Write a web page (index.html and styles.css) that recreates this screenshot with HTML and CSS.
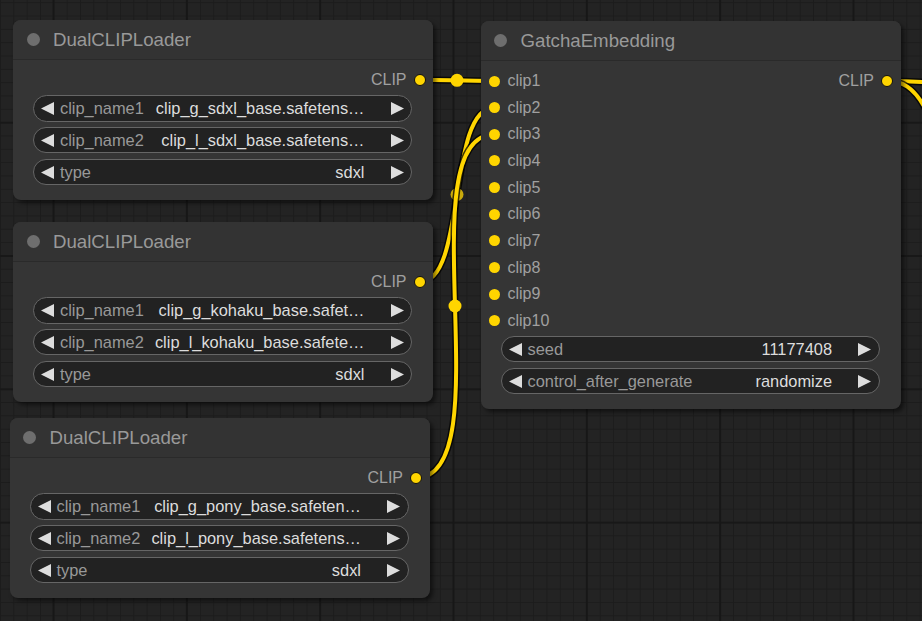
FILE: index.html
```html
<!DOCTYPE html>
<html>
<head>
<meta charset="utf-8">
<link rel="stylesheet" href="styles.css">
</head>
<body>
<div class="canvas">
  <svg class="links" width="922" height="621" viewBox="0 0 922 621">
    <g class="link">
      <path class="lb" d="M420,79.7 C438.5,79.7 475.5,81 494,81"/>
      <path class="ly" d="M420,79.7 C438.5,79.7 475.5,81 494,81"/>
    </g>
    <circle class="mid" cx="457" cy="80.3" r="6.5"/>
    <g class="link">
      <path class="lb" d="M420,282 C467,282 447,107.7 494,107.7"/>
      <path class="ly" d="M420,282 C467,282 447,107.7 494,107.7"/>
    </g>
    <circle class="mid dim" cx="457" cy="194.5" r="6.5"/>
    <g class="link">
      <path class="lb" d="M416,478 C504,478 406,134.4 494,134.4"/>
      <path class="ly" d="M416,478 C504,478 406,134.4 494,134.4"/>
    </g>
    <circle class="mid" cx="455" cy="306" r="6.5"/>
    <g class="link">
      <path class="lb" d="M887,81 C950,81 1000,90 1100,100"/>
      <path class="ly" d="M887,81 C950,81 1000,90 1100,100"/>
      <path class="lb" d="M887,81 C918,81 930,108 960,200"/>
      <path class="ly" d="M887,81 C918,81 930,108 960,200"/>
    </g>
  </svg>

  <div class="node n1">
    <div class="title"><span class="tdot"></span><span class="tname">DualCLIPLoader</span></div>
    <div class="body">
      <div class="slot out"><span class="slabel">CLIP</span><span class="dot odot"></span></div>
      <div class="widgets">
        <div class="widget"><svg class="arr" viewBox="0 0 13 13"><polygon points="13,0 0,6.5 13,13"/></svg><span class="wl">clip_name1</span><span class="wv">clip_g_sdxl_base.safetens…</span><svg class="arr" viewBox="0 0 13 13"><polygon points="0,0 13,6.5 0,13"/></svg></div>
        <div class="widget"><svg class="arr" viewBox="0 0 13 13"><polygon points="13,0 0,6.5 13,13"/></svg><span class="wl">clip_name2</span><span class="wv">clip_l_sdxl_base.safetens…</span><svg class="arr" viewBox="0 0 13 13"><polygon points="0,0 13,6.5 0,13"/></svg></div>
        <div class="widget"><svg class="arr" viewBox="0 0 13 13"><polygon points="13,0 0,6.5 13,13"/></svg><span class="wl">type</span><span class="wv">sdxl</span><svg class="arr" viewBox="0 0 13 13"><polygon points="0,0 13,6.5 0,13"/></svg></div>
      </div>
    </div>
  </div>

  <div class="node n2">
    <div class="title"><span class="tdot"></span><span class="tname">DualCLIPLoader</span></div>
    <div class="body">
      <div class="slot out"><span class="slabel">CLIP</span><span class="dot odot"></span></div>
      <div class="widgets">
        <div class="widget"><svg class="arr" viewBox="0 0 13 13"><polygon points="13,0 0,6.5 13,13"/></svg><span class="wl">clip_name1</span><span class="wv">clip_g_kohaku_base.safet…</span><svg class="arr" viewBox="0 0 13 13"><polygon points="0,0 13,6.5 0,13"/></svg></div>
        <div class="widget"><svg class="arr" viewBox="0 0 13 13"><polygon points="13,0 0,6.5 13,13"/></svg><span class="wl">clip_name2</span><span class="wv">clip_l_kohaku_base.safete…</span><svg class="arr" viewBox="0 0 13 13"><polygon points="0,0 13,6.5 0,13"/></svg></div>
        <div class="widget"><svg class="arr" viewBox="0 0 13 13"><polygon points="13,0 0,6.5 13,13"/></svg><span class="wl">type</span><span class="wv">sdxl</span><svg class="arr" viewBox="0 0 13 13"><polygon points="0,0 13,6.5 0,13"/></svg></div>
      </div>
    </div>
  </div>

  <div class="node n3">
    <div class="title"><span class="tdot"></span><span class="tname">DualCLIPLoader</span></div>
    <div class="body">
      <div class="slot out"><span class="slabel">CLIP</span><span class="dot odot"></span></div>
      <div class="widgets">
        <div class="widget"><svg class="arr" viewBox="0 0 13 13"><polygon points="13,0 0,6.5 13,13"/></svg><span class="wl">clip_name1</span><span class="wv">clip_g_pony_base.safeten…</span><svg class="arr" viewBox="0 0 13 13"><polygon points="0,0 13,6.5 0,13"/></svg></div>
        <div class="widget"><svg class="arr" viewBox="0 0 13 13"><polygon points="13,0 0,6.5 13,13"/></svg><span class="wl">clip_name2</span><span class="wv">clip_l_pony_base.safetens…</span><svg class="arr" viewBox="0 0 13 13"><polygon points="0,0 13,6.5 0,13"/></svg></div>
        <div class="widget"><svg class="arr" viewBox="0 0 13 13"><polygon points="13,0 0,6.5 13,13"/></svg><span class="wl">type</span><span class="wv">sdxl</span><svg class="arr" viewBox="0 0 13 13"><polygon points="0,0 13,6.5 0,13"/></svg></div>
      </div>
    </div>
  </div>

  <div class="node ng">
    <div class="title"><span class="tdot"></span><span class="tname">GatchaEmbedding</span></div>
    <div class="body">
      <div class="slot both"><span class="dot idot"></span><span class="ilabel">clip1</span><span class="slabel push">CLIP</span><span class="dot odot"></span></div>
      <div class="slot"><span class="dot idot"></span><span class="ilabel">clip2</span></div>
      <div class="slot"><span class="dot idot"></span><span class="ilabel">clip3</span></div>
      <div class="slot"><span class="dot idot"></span><span class="ilabel">clip4</span></div>
      <div class="slot"><span class="dot idot"></span><span class="ilabel">clip5</span></div>
      <div class="slot"><span class="dot idot"></span><span class="ilabel">clip6</span></div>
      <div class="slot"><span class="dot idot"></span><span class="ilabel">clip7</span></div>
      <div class="slot"><span class="dot idot"></span><span class="ilabel">clip8</span></div>
      <div class="slot"><span class="dot idot"></span><span class="ilabel">clip9</span></div>
      <div class="slot"><span class="dot idot"></span><span class="ilabel">clip10</span></div>
      <div class="widgets">
        <div class="widget"><svg class="arr" viewBox="0 0 13 13"><polygon points="13,0 0,6.5 13,13"/></svg><span class="wl">seed</span><span class="wv">11177408</span><svg class="arr" viewBox="0 0 13 13"><polygon points="0,0 13,6.5 0,13"/></svg></div>
        <div class="widget"><svg class="arr" viewBox="0 0 13 13"><polygon points="13,0 0,6.5 13,13"/></svg><span class="wl">control_after_generate</span><span class="wv">randomize</span><svg class="arr" viewBox="0 0 13 13"><polygon points="0,0 13,6.5 0,13"/></svg></div>
      </div>
    </div>
  </div>
</div>
</body>
</html>
```

FILE: styles.css
```css
* { box-sizing: border-box; }
html, body {
  margin: 0;
  padding: 0;
  width: 922px;
  height: 621px;
  overflow: hidden;
}
body {
  font-family: "Liberation Sans", Arial, sans-serif;
  background-color: #232323;
  background-image:
    linear-gradient(to right, #171717 2px, transparent 2px),
    linear-gradient(to bottom, #181818 2px, transparent 2px),
    linear-gradient(to right, #1c1c1c 1px, transparent 1px),
    linear-gradient(to bottom, #1c1c1c 1px, transparent 1px);
  background-size: 133.333px 133.333px, 133.333px 133.333px, 13.333px 13.333px, 13.333px 13.333px;
  background-position: 52.5px 0, 0 121.7px, 0 0, 0 2.2px;
}
.canvas {
  position: relative;
  width: 922px;
  height: 621px;
}
.links {
  position: absolute;
  left: 0;
  top: 0;
}
.lb {
  fill: none;
  stroke: #000;
  stroke-opacity: 0.75;
  stroke-width: 7;
}
.ly {
  fill: none;
  stroke: #FFD500;
  stroke-width: 4;
}
.mid { fill: #FFD500; }
.mid.dim { fill: #c9aa0c; }

.node {
  position: absolute;
  width: 420px;
  background: #353535;
  border-radius: 8px;
  box-shadow: 3px 3px 4px rgba(0, 0, 0, 0.5);
  color: #999;
  font-size: 16px;
}
.n1 { left: 13px; top: 20px; }
.n2 { left: 13px; top: 222px; }
.n3 { left: 9.5px; top: 418px; }
.ng { left: 480.5px; top: 21px; }

.title {
  height: 40px;
  display: flex;
  align-items: center;
  padding-left: 13.5px;
  background: #333;
  border-radius: 8px 8px 0 0;
  border-bottom: 1px solid #2a2a2a;
}
.tdot {
  width: 13px;
  height: 13px;
  border-radius: 50%;
  background: #6e6e6e;
  flex: none;
}
.tname {
  margin-left: 13.5px;
  font-size: 18.67px;
  color: #999;
  white-space: nowrap;
}
.body {
  padding: 6.7px 0 15px 0;
  display: flex;
  flex-direction: column;
}
.slot {
  height: 26.667px;
  display: flex;
  align-items: center;
  padding: 0 7.5px 0 8.5px;
  color: #a0a0a0;
}
.slot.out { justify-content: flex-end; }
.slabel { margin-right: 7px; }
.push { margin-left: auto; }
.dot {
  width: 11px;
  height: 11px;
  border-radius: 50%;
  background: #FFD500;
  flex: none;
}
.odot {
  width: 12px;
  height: 12px;
  border: 1.3px solid #111;
}
.ilabel { margin-left: 7.5px; }

.widgets {
  margin-top: 1.5px;
  padding: 0 21px 0 20px;
  display: flex;
  flex-direction: column;
  gap: 5.333px;
}
.widget {
  height: 26.667px;
  border: 1px solid #666;
  border-radius: 14px;
  background: #222;
  display: flex;
  align-items: center;
  padding: 0 7.5px 0 7px;
  white-space: nowrap;
  font-size: 16.4px;
}
.arr {
  width: 13px;
  height: 13px;
  flex: none;
  fill: #ddd;
}
.wl {
  margin-left: 6px;
  color: #999;
}
.wv {
  margin-left: auto;
  margin-right: 26px;
  color: #ddd;
}
```
